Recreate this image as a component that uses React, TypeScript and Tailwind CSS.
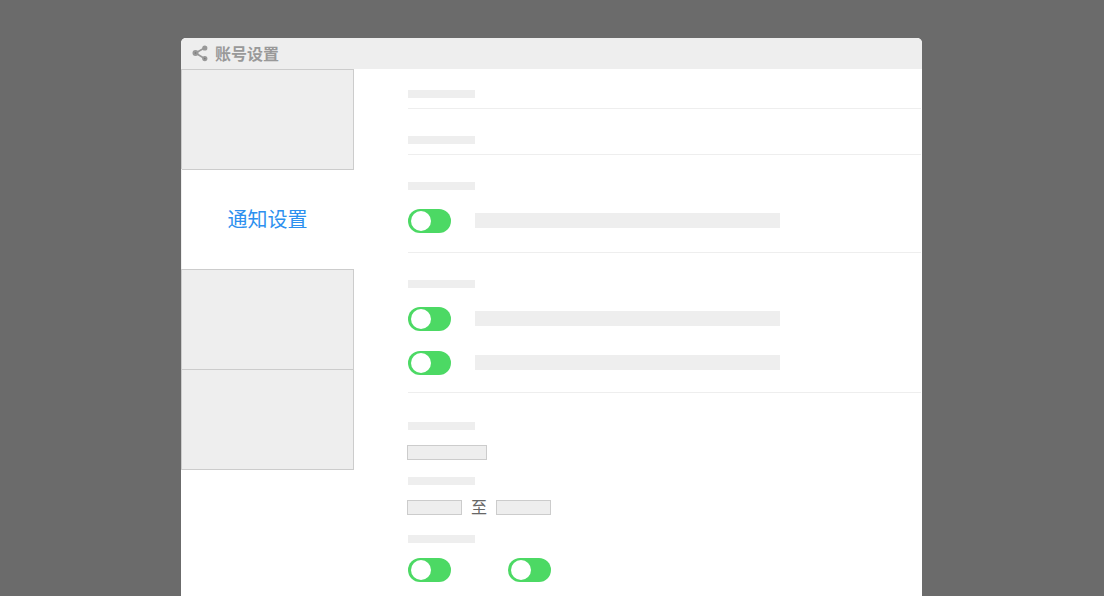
const Bar = ({ className }: { className: string }) => <div className={`bg-[#eeeeee] ${className}`} />;

const Label = ({ className = "" }: { className?: string }) => <Bar className={`h-2 w-[67px] ${className}`} />;

const Toggle = () => (
  <div className="flex h-6 w-[43px] shrink-0 items-center rounded-full bg-[#4cd964] pl-[3px]">
    <div className="size-5 rounded-full bg-white" />
  </div>
);

const Input = ({ className }: { className: string }) => (
  <div className={`h-[15px] border border-[#cccccc] bg-[#eeeeee] ${className}`} />
);

const ToggleRow = ({ className = "" }: { className?: string }) => (
  <div className={`flex items-start gap-6 ${className}`}>
    <Toggle />
    <Bar className="mt-1 h-[15px] w-[305px]" />
  </div>
);

const Tab = () => <div className="h-[101px] w-[173px] border border-[#cccccc] bg-[#eeeeee]" />;

export default function App() {
  return (
    <div className="h-[596px] overflow-hidden bg-[#6b6b6b] pt-[38px] font-['Liberation_Sans','Noto_Sans_CJK_SC',sans-serif]">
      <div className="ml-[181px] h-[600px] w-[741px] overflow-hidden rounded-t-[5px] bg-white">
        <div className="flex h-[31px] items-center gap-[7px] bg-[#eeeeee] pl-[11px]">
          <svg width="16" height="17" viewBox="0 0 16 17" fill="#999999" stroke="#999999">
            <path d="M3.5 8 L12.5 3 M3.5 8 L12.5 13.5" strokeWidth="1.6" fill="none" />
            <circle cx="3.5" cy="8" r="3" stroke="none" />
            <circle cx="12.8" cy="3" r="2.6" stroke="none" />
            <circle cx="12.8" cy="13.6" r="2.6" stroke="none" />
            <circle cx="3.5" cy="8" r="0.8" fill="#777777" stroke="none" />
            <circle cx="12.8" cy="13.6" r="0.8" fill="#777777" stroke="none" />
          </svg>
          <span className="pt-[2px] text-base leading-[29px] font-bold text-[#999999] opacity-99">账号设置</span>
        </div>
        <div className="flex">
          <div className="w-[173px] shrink-0">
            <Tab />
            <div className="-mt-px flex h-[101px] items-center justify-center border-l border-[#eeeeee] pr-px text-[20px] text-[#2b8fef]">
              <span className="opacity-99">通知设置</span>
            </div>
            <div className="-mt-px"><Tab /></div>
            <div className="-mt-px"><Tab /></div>
          </div>
          <div className="ml-[54px] flex-1 pr-px">
            <Label className="mt-[21px]" />
            <div className="mt-[10px] border-t border-[#eeeeee]" />
            <Label className="mt-[27px]" />
            <div className="mt-[10px] border-t border-[#eeeeee]" />
            <Label className="mt-[27px]" />
            <ToggleRow className="mt-[19px]" />
            <div className="mt-[19px] border-t border-[#eeeeee]" />
            <Label className="mt-[27px]" />
            <ToggleRow className="mt-[19px]" />
            <ToggleRow className="mt-5" />
            <div className="mt-[17px] border-t border-[#eeeeee]" />
            <Label className="mt-[29px]" />
            <Input className="mt-[15px] -ml-px w-[80px]" />
            <Label className="mt-[17px]" />
            <div className="mt-[15px] -ml-px flex h-[15px] items-center">
              <Input className="w-[55px]" />
              <span className="w-[34px] text-center text-base leading-[15px] text-[#666666] opacity-99">至</span>
              <Input className="w-[55px]" />
            </div>
            <Label className="mt-5" />
            <div className="mt-[15px] flex gap-[57px]">
              <Toggle />
              <Toggle />
            </div>
          </div>
        </div>
      </div>
    </div>
  );
}
